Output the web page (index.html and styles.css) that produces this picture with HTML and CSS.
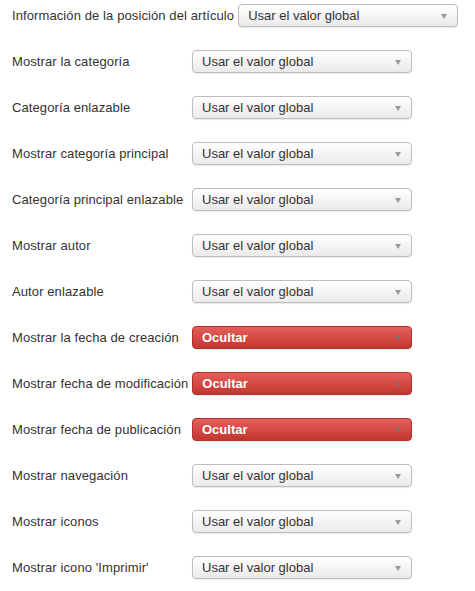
FILE: index.html
```html
<!DOCTYPE html>
<html lang="es">
<head>
<meta charset="utf-8">
<link rel="stylesheet" href="styles.css">
</head>
<body>
<div class="form">
  <div class="row"><label class="lbl">Información de la posición del artículo</label><div class="sel">Usar el valor global<span class="caret"></span></div></div>
  <div class="row"><label class="lbl">Mostrar la categoría</label><div class="sel">Usar el valor global<span class="caret"></span></div></div>
  <div class="row"><label class="lbl">Categoría enlazable</label><div class="sel">Usar el valor global<span class="caret"></span></div></div>
  <div class="row"><label class="lbl">Mostrar categoría principal</label><div class="sel">Usar el valor global<span class="caret"></span></div></div>
  <div class="row"><label class="lbl">Categoría principal enlazable</label><div class="sel">Usar el valor global<span class="caret"></span></div></div>
  <div class="row"><label class="lbl">Mostrar autor</label><div class="sel">Usar el valor global<span class="caret"></span></div></div>
  <div class="row"><label class="lbl">Autor enlazable</label><div class="sel">Usar el valor global<span class="caret"></span></div></div>
  <div class="row"><label class="lbl">Mostrar la fecha de creación</label><div class="sel danger">Ocultar<span class="caret"></span></div></div>
  <div class="row"><label class="lbl">Mostrar fecha de modificación</label><div class="sel danger">Ocultar<span class="caret"></span></div></div>
  <div class="row"><label class="lbl">Mostrar fecha de publicación</label><div class="sel danger">Ocultar<span class="caret"></span></div></div>
  <div class="row"><label class="lbl">Mostrar navegación</label><div class="sel">Usar el valor global<span class="caret"></span></div></div>
  <div class="row"><label class="lbl">Mostrar iconos</label><div class="sel">Usar el valor global<span class="caret"></span></div></div>
  <div class="row"><label class="lbl">Mostrar icono 'Imprimir'</label><div class="sel">Usar el valor global<span class="caret"></span></div></div>
</div>
</body>
</html>
```
FILE: styles.css
```css
html, body {
  margin: 0;
  padding: 0;
  background: #fff;
}
body {
  font-family: "Liberation Sans", Arial, Helvetica, sans-serif;
  font-size: 13px;
  color: #333;
}
.form {
  padding: 4px 12px 0 12px;
}
.row {
  display: flex;
  align-items: center;
  height: 23px;
  margin-bottom: 23px;
}
.lbl {
  min-width: 176px;
  margin-right: 4px;
  white-space: nowrap;
  color: #333;
  letter-spacing: 0.1px;
}
.sel {
  position: relative;
  box-sizing: border-box;
  width: 220px;
  height: 23px;
  padding: 0 20px 0 9px;
  line-height: 21px;
  border: 1px solid #bdbdbd;
  border-radius: 4px;
  background: linear-gradient(#ffffff, #eaeaea);
  box-shadow: 0 1px 1px rgba(0, 0, 0, 0.08);
  color: #333;
  font-size: 13px;
}
.caret {
  position: absolute;
  right: 10px;
  top: 9px;
  width: 0;
  height: 0;
  border-left: 3px solid transparent;
  border-right: 3px solid transparent;
  border-top: 5px solid #999;
}
.sel.danger {
  border-color: #b1322c;
  background: linear-gradient(#e65f5a, #c2362f);
  color: #fff;
  font-weight: bold;
}
.sel.danger .caret {
  border-top-color: #8a6a6a;
}
```
